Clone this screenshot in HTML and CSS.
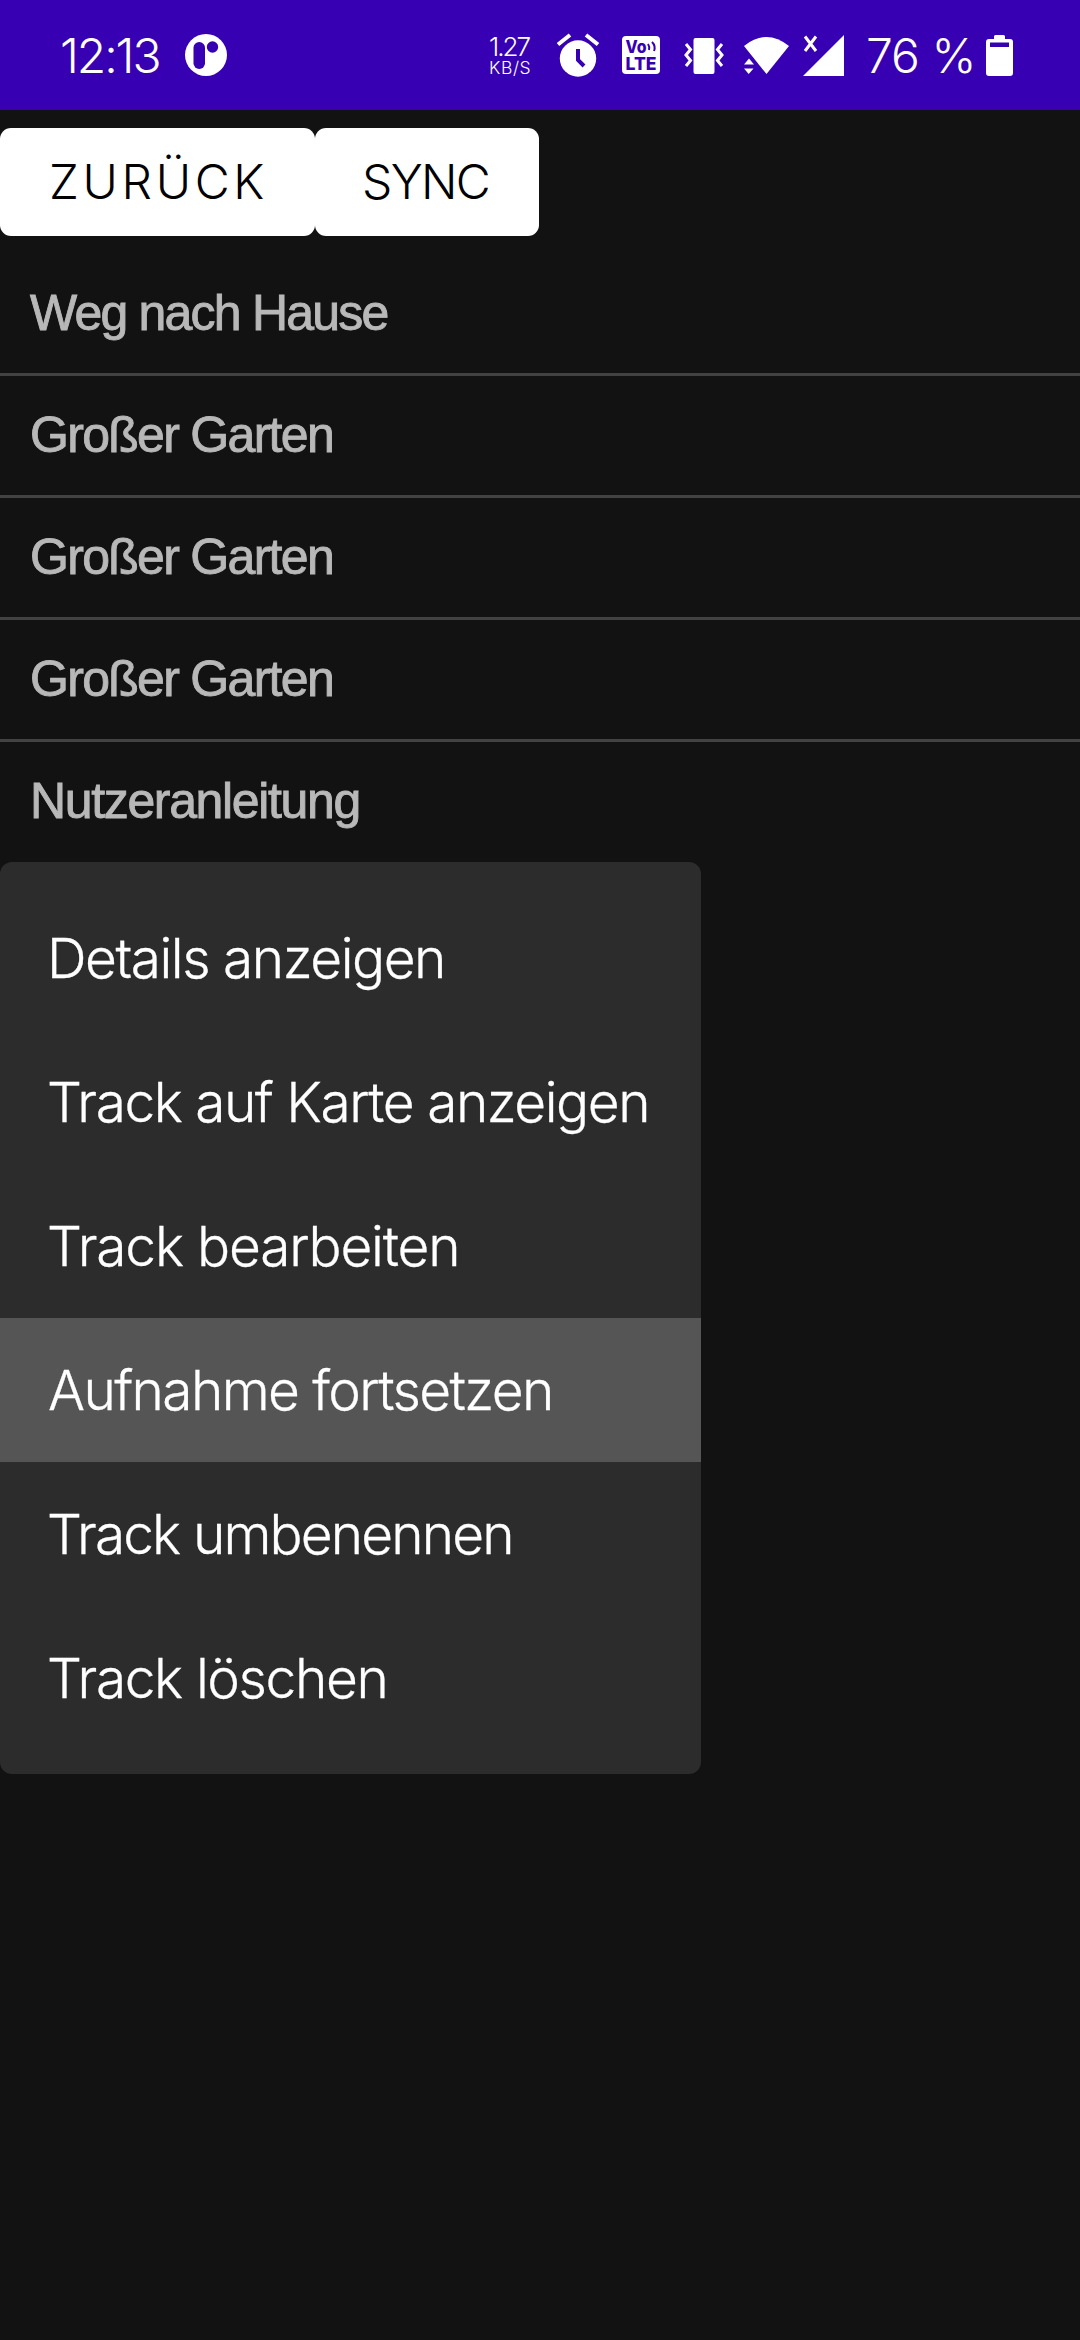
FILE: index.html
```
<!DOCTYPE html>
<html lang="de">
<head>
<meta charset="utf-8">
<title>Tracks</title>
<link rel="stylesheet" href="styles.css">
</head>
<body>
<header class="status">
  <span class="clock">12:13</span>
  <svg class="app-icon" width="42" height="42" viewBox="0 0 42 42"><circle cx="21" cy="21" r="21" fill="#fff"/><rect x="8.500" y="8" width="11.500" height="27" rx="5.700" fill="#3700b3"/><circle cx="27.500" cy="13" r="5.700" fill="#3700b3"/></svg>
  <div class="speed"><span class="rate">1.27</span><span class="unit">KB/S</span></div>
  <svg class="alarm" width="44" height="44" viewBox="0 0 44 44"><circle cx="22" cy="25.500" r="18.200" fill="#fff"/><path d="M2 11.500 14 2M30 2l12 9.500" stroke="#fff" stroke-width="4"/><path d="M22 16v11l6 6" fill="none" stroke="#3700b3" stroke-width="4"/></svg>
  <svg class="volte" width="38" height="38" viewBox="0 0 38 38"><rect width="38" height="38" rx="4" fill="#fff"/><g fill="#3700b3" font-family="Inter, sans-serif" font-weight="800"><text x="3.500" y="17" font-size="17" textLength="21" lengthAdjust="spacingAndGlyphs">Vo</text><text x="3.500" y="34" font-size="18" textLength="31" lengthAdjust="spacingAndGlyphs">LTE</text></g><path d="M26 8q2 3 1 6M30 6q4 4 2 9" fill="none" stroke="#3700b3" stroke-width="2"/></svg>
  <svg class="vibrate" width="40" height="36" viewBox="0 0 40 36"><rect x="9.500" width="21" height="36" rx="2" fill="#fff"/><path d="M2 6 6.500 11.500 2 17l4.500 5.500L2 28M38 6l-4.500 5.500L38 17l-4.500 5.500L38 28" fill="none" stroke="#fff" stroke-width="3"/></svg>
  <svg class="wifi" width="45" height="37" viewBox="0 0 45 37"><path d="M0 9Q22.500-9 45 9L22.500 37z" fill="#fff"/><path d="M0 22l5-5.500 5 5.500v10l-5 5.500L0 32z" fill="#3700b3"/><path d="M0 27.500l5-6 5 6zM0 31.500h9.500L4.700 37z" fill="#fff"/></svg>
  <svg class="signal" width="41" height="41" viewBox="0 0 41 41"><path d="M41 0v41H0z" fill="#fff"/><path d="M2 1.500 13 16M13 1.500 2 16" stroke="#fff" stroke-width="3"/></svg>
  <span class="percent">76 %</span>
  <svg class="battery" width="27" height="41" viewBox="0 0 27 41"><path d="M8 4V1.500Q8 0 9.500 0h8Q19 0 19 1.500V4h5q3 0 3 3v31q0 3-3 3H3q-3 0-3-3V7q0-3 3-3z" fill="#fff"/><rect x="4" y="7.500" width="19" height="4.500" fill="#3700b3"/></svg>
</header>
<main>
  <div class="toolbar">
    <button class="btn btn-back">ZURÜCK</button><button class="btn btn-sync">SYNC</button>
  </div>
  <ul class="tracks">
    <li class="track home">Weg nach Hause</li>
    <li class="track">Großer Garten</li>
    <li class="track">Großer Garten</li>
    <li class="track">Großer Garten</li>
    <li class="track guide">Nutzeranleitung</li>
  </ul>
  <ul class="menu">
    <li class="item details">Details anzeigen</li>
    <li class="item map">Track auf Karte anzeigen</li>
    <li class="item edit">Track bearbeiten</li>
    <li class="item resume active">Aufnahme fortsetzen</li>
    <li class="item rename">Track umbenennen</li>
    <li class="item delete">Track löschen</li>
  </ul>
</main>
</body>
</html>
```
FILE: styles.css
```
* { box-sizing: border-box; }
body { margin: 0; min-height: 2340px; background: #121212; font-family: Inter, "Liberation Sans", sans-serif; }
ul { list-style: none; margin: 0; padding: 0; }

.status { display: flex; align-items: center; height: 110px; padding-left: 60px; background: #3700b3; color: #fff; font-weight: 300; }
.status > * { flex: none; }
.clock, .percent { font-size: 48px; white-space: nowrap; }
.clock { width: 125px; letter-spacing: -2.1px; }
.percent { width: 120px; margin-left: 22px; letter-spacing: -1px; }
.speed { display: flex; flex-direction: column; width: 67px; margin-left: 262px; }
.rate { font-size: 26px; line-height: 24px; letter-spacing: -2px; }
.unit { font-size: 17.5px; line-height: 17px; letter-spacing: 0.6px; }
.volte { margin-left: 22px; }
.vibrate { margin: 2px 0 0 24px; }
.wifi { margin-left: 20px; }
.signal { margin-left: 14px; }

.toolbar { display: flex; height: 126px; padding-top: 18px; }
.btn { height: 108px; border: 0; border-radius: 11px; background: #fff; color: #000; font: 300 48px Inter, sans-serif; text-align: left; padding: 0 0 2px; }
.btn-back { width: 315px; padding-left: 49px; letter-spacing: 3.7px; }
.btn-sync { width: 224px; padding-left: 47px; letter-spacing: -1.7px; }

.tracks { padding-top: 18px; }
.track { height: 122px; padding-left: 30px; line-height: 119px; font-family: "Liberation Sans", Arial, sans-serif; font-size: 50px; letter-spacing: -1.7px; color: #b8b8b8; border-bottom: 3px solid #424242; -webkit-text-stroke: 0.9px #b8b8b8; }
.track:last-child { height: 120px; border: 0; }
.home { letter-spacing: -1.8px; }
.guide { letter-spacing: -1.35px; }

.menu { width: 701px; background: #2c2c2c; padding: 24px 0; border-radius: 12px; }
.item { height: 144px; line-height: 144px; padding-left: 47px; font-size: 55px; font-weight: 300; color: #fff; white-space: nowrap; -webkit-text-stroke: 0.3px #fff; }
.active { background: #555; }
.details { letter-spacing: -1.48px; }
.map { letter-spacing: -1.48px; }
.edit { letter-spacing: -1.17px; }
.resume { padding-left: 48px; letter-spacing: -1.61px; }
.rename { letter-spacing: -1.87px; }
.delete { letter-spacing: -1.37px; }
```
